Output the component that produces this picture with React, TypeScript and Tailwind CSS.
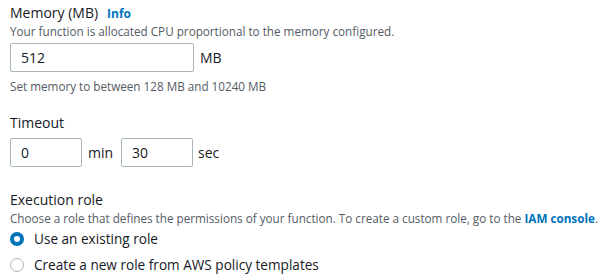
export default function App() {
  return (
    <div className="w-[600px] h-[280px] bg-white px-[10px] pt-[3px] text-[#16191f]" style={{ fontFamily: '"Open Sans", "Noto Sans", sans-serif' }}>
      <div className="flex items-baseline gap-[9px]">
        <span className="text-[14px] leading-[20px]">Memory (MB)</span>
        <span className="text-[12px] font-bold text-[#0073bb]">Info</span>
      </div>
      <p className="text-[11.7px] leading-[16px] text-[#545b64]">Your function is allocated CPU proportional to the memory configured.</p>
      <div className="mt-[4px] flex items-center gap-[6px]">
        <div className="w-[184px] h-[29px] border border-[#aab7b8] rounded-[2px] px-[10px] flex items-center text-[14px]">512</div>
        <span className="text-[14px]">MB</span>
      </div>
      <p className="mt-[6px] text-[11.7px] leading-[16px] text-[#545b64]">Set memory to between 128 MB and 10240 MB</p>

      <div className="mt-[19px] text-[14px] leading-[20px]">Timeout</div>
      <div className="mt-[5px] flex items-center">
        <div className="w-[72px] h-[29px] border border-[#aab7b8] rounded-[2px] px-[10px] flex items-center text-[14px]">0</div>
        <span className="ml-[6px] w-[33px] text-[14px]">min</span>
        <div className="w-[72px] h-[29px] border border-[#aab7b8] rounded-[2px] px-[10px] flex items-center text-[14px]">30</div>
        <span className="ml-[5px] text-[14px]">sec</span>
      </div>

      <div className="mt-[23px] text-[14px] leading-[20px]">Execution role</div>
      <p className="text-[11.7px] leading-[16px] text-[#545b64] whitespace-nowrap">
        Choose a role that defines the permissions of your function. To create a custom role, go to the{" "}
        <span className="font-bold text-[#0073bb]">IAM console</span>.
      </p>
      <div className="mt-[3px] flex flex-col gap-[6px]">
        <label className="flex items-center gap-[10px] h-[20px]">
          <span className="w-[14px] h-[14px] rounded-full border-[4px] border-[#0073bb] bg-white" />
          <span className="text-[13.6px]">Use an existing role</span>
        </label>
        <label className="flex items-center gap-[10px] h-[20px]">
          <span className="w-[14px] h-[14px] rounded-full border border-[#aab7b8] bg-white" />
          <span className="text-[13.6px]">Create a new role from AWS policy templates</span>
        </label>
      </div>
    </div>
  );
}
